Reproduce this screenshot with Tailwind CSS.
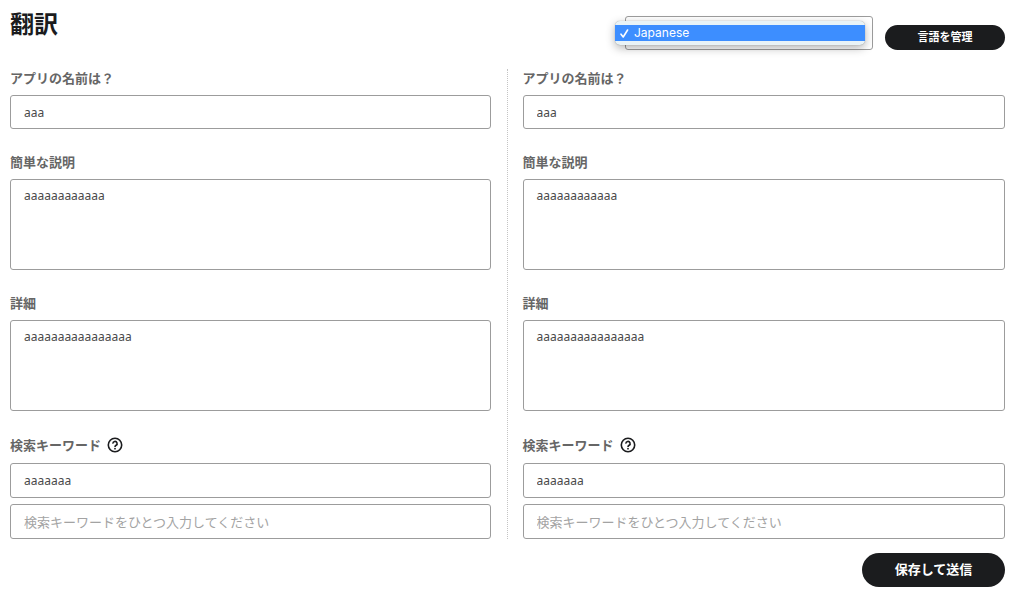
<!DOCTYPE html>
<html lang="ja">
<head>
    <meta charset="UTF-8">
    <title>翻訳</title>
    <meta name="viewport" content="width=device-width, initial-scale=1.0">
    <script src="https://cdn.jsdelivr.net/npm/@tailwindcss/browser@4"></script>
</head>
<body class="bg-white text-[#4a4a4a] text-[13px] font-['Noto_Sans','Noto_Sans_CJK_JP',sans-serif]">
    <div class="pl-[10px] pr-[19px] pb-2">
        <!-- Header -->
        <header class="flex items-start justify-between pt-2">
            <h1 class="text-2xl leading-8 font-bold text-[#1b1c1e]">翻訳</h1>
            <div class="flex items-end gap-3 pt-2">
                <div class="relative w-[248px]">
                    <select id="language" aria-label="言語" class="block appearance-none w-full h-[34px] border border-[#9c9c9c] rounded-[3px] bg-white px-3">
                        <option>Japanese</option>
                    </select>
                    <!-- Open language menu -->
                    <ul role="listbox" aria-label="言語" class="absolute -left-[10px] top-[5px] w-[250px] py-1 rounded-[5px] bg-[#e9f3f7] shadow-[0_3px_10px_rgba(0,0,0,0.3),0_0_1px_rgba(0,0,0,0.4)]">
                        <li role="option" aria-selected="true" class="flex items-center gap-1 h-4 pl-1 bg-[#3d8eff] text-white font-['Inter',sans-serif] text-[12px] leading-4">
                            <svg class="w-[11px] h-[11px]" viewBox="0 0 11 11" fill="none" stroke="currentColor" stroke-width="1.6" stroke-linecap="round" stroke-linejoin="round"><path d="M2 6.2 4.2 9 8.6 2"/></svg>
                            Japanese
                        </li>
                    </ul>
                </div>
                <button type="button" class="w-[120px] h-[25px] rounded-full bg-[#1b1c1e] text-white text-[11px] font-bold">言語を管理</button>
            </div>
        </header>

        <form>
            <!-- Source and translation columns -->
            <div class="grid grid-cols-2 mt-[19px]">
                <section class="flex flex-col gap-6 pr-4 border-r border-dotted border-[#c4c4c4]">
                    <div class="flex flex-col gap-2">
                        <label for="name1" class="leading-[18px] font-bold text-[#666]">アプリの名前は？</label>
                        <input id="name1" type="text" value="aaa" class="w-full h-[34px] border border-[#9c9c9c] rounded-[3px] px-[13px] text-[12px]">
                    </div>
                    <div class="flex flex-col gap-2">
                        <label for="short1" class="leading-[18px] font-bold text-[#666]">簡単な説明</label>
                        <textarea id="short1" class="w-full h-[91px] resize-none border border-[#9c9c9c] rounded-[3px] px-[13px] py-2 text-[12px] leading-4">aaaaaaaaaaaa</textarea>
                    </div>
                    <div class="flex flex-col gap-2">
                        <label for="detail1" class="leading-[18px] font-bold text-[#666]">詳細</label>
                        <textarea id="detail1" class="w-full h-[91px] resize-none border border-[#9c9c9c] rounded-[3px] px-[13px] py-2 text-[12px] leading-4">aaaaaaaaaaaaaaaa</textarea>
                    </div>
                    <div class="flex flex-col gap-2">
                        <div class="flex items-center gap-[6px] h-5">
                            <label for="keyword1" class="leading-[18px] font-bold text-[#666]">検索キーワード</label>
                            <button type="button" aria-label="ヘルプ" class="text-[#1b1c1e]">
                                <svg class="block w-4 h-4" viewBox="0 0 16 16" fill="none" stroke="currentColor" stroke-width="1.6"><circle cx="8" cy="8" r="6.7"/><path d="M5.9 6.6a2.1 2.1 0 1 1 3.2 1.7C8.3 8.8 8 9.1 8 9.9"/><circle cx="8" cy="11.7" r="0.9" fill="currentColor" stroke="none"/></svg>
                            </button>
                        </div>
                        <div class="flex flex-col gap-[6px]">
                            <input id="keyword1" type="text" value="aaaaaaa" class="w-full h-[35px] border border-[#9c9c9c] rounded-[3px] px-[13px] text-[12px]">
                            <input type="text" aria-label="検索キーワード 2" placeholder="検索キーワードをひとつ入力してください" class="w-full h-[35px] border border-[#9c9c9c] rounded-[3px] px-[13px] placeholder:text-[#a3a3a3]">
                        </div>
                    </div>
                </section>

                <section class="flex flex-col gap-6 pl-[15px]">
                    <div class="flex flex-col gap-2">
                        <label for="name2" class="leading-[18px] font-bold text-[#666]">アプリの名前は？</label>
                        <input id="name2" type="text" value="aaa" class="w-full h-[34px] border border-[#9c9c9c] rounded-[3px] px-[13px] text-[12px]">
                    </div>
                    <div class="flex flex-col gap-2">
                        <label for="short2" class="leading-[18px] font-bold text-[#666]">簡単な説明</label>
                        <textarea id="short2" class="w-full h-[91px] resize-none border border-[#9c9c9c] rounded-[3px] px-[13px] py-2 text-[12px] leading-4">aaaaaaaaaaaa</textarea>
                    </div>
                    <div class="flex flex-col gap-2">
                        <label for="detail2" class="leading-[18px] font-bold text-[#666]">詳細</label>
                        <textarea id="detail2" class="w-full h-[91px] resize-none border border-[#9c9c9c] rounded-[3px] px-[13px] py-2 text-[12px] leading-4">aaaaaaaaaaaaaaaa</textarea>
                    </div>
                    <div class="flex flex-col gap-2">
                        <div class="flex items-center gap-[6px] h-5">
                            <label for="keyword2" class="leading-[18px] font-bold text-[#666]">検索キーワード</label>
                            <button type="button" aria-label="ヘルプ" class="text-[#1b1c1e]">
                                <svg class="block w-4 h-4" viewBox="0 0 16 16" fill="none" stroke="currentColor" stroke-width="1.6"><circle cx="8" cy="8" r="6.7"/><path d="M5.9 6.6a2.1 2.1 0 1 1 3.2 1.7C8.3 8.8 8 9.1 8 9.9"/><circle cx="8" cy="11.7" r="0.9" fill="currentColor" stroke="none"/></svg>
                            </button>
                        </div>
                        <div class="flex flex-col gap-[6px]">
                            <input id="keyword2" type="text" value="aaaaaaa" class="w-full h-[35px] border border-[#9c9c9c] rounded-[3px] px-[13px] text-[12px]">
                            <input type="text" aria-label="検索キーワード 2" placeholder="検索キーワードをひとつ入力してください" class="w-full h-[35px] border border-[#9c9c9c] rounded-[3px] px-[13px] placeholder:text-[#a3a3a3]">
                        </div>
                    </div>
                </section>
            </div>

            <div class="flex justify-end mt-[14px]">
                <button type="submit" class="w-[143px] h-[34px] rounded-full bg-[#1b1c1e] text-white font-bold">保存して送信</button>
            </div>
        </form>
    </div>
</body>
</html>
